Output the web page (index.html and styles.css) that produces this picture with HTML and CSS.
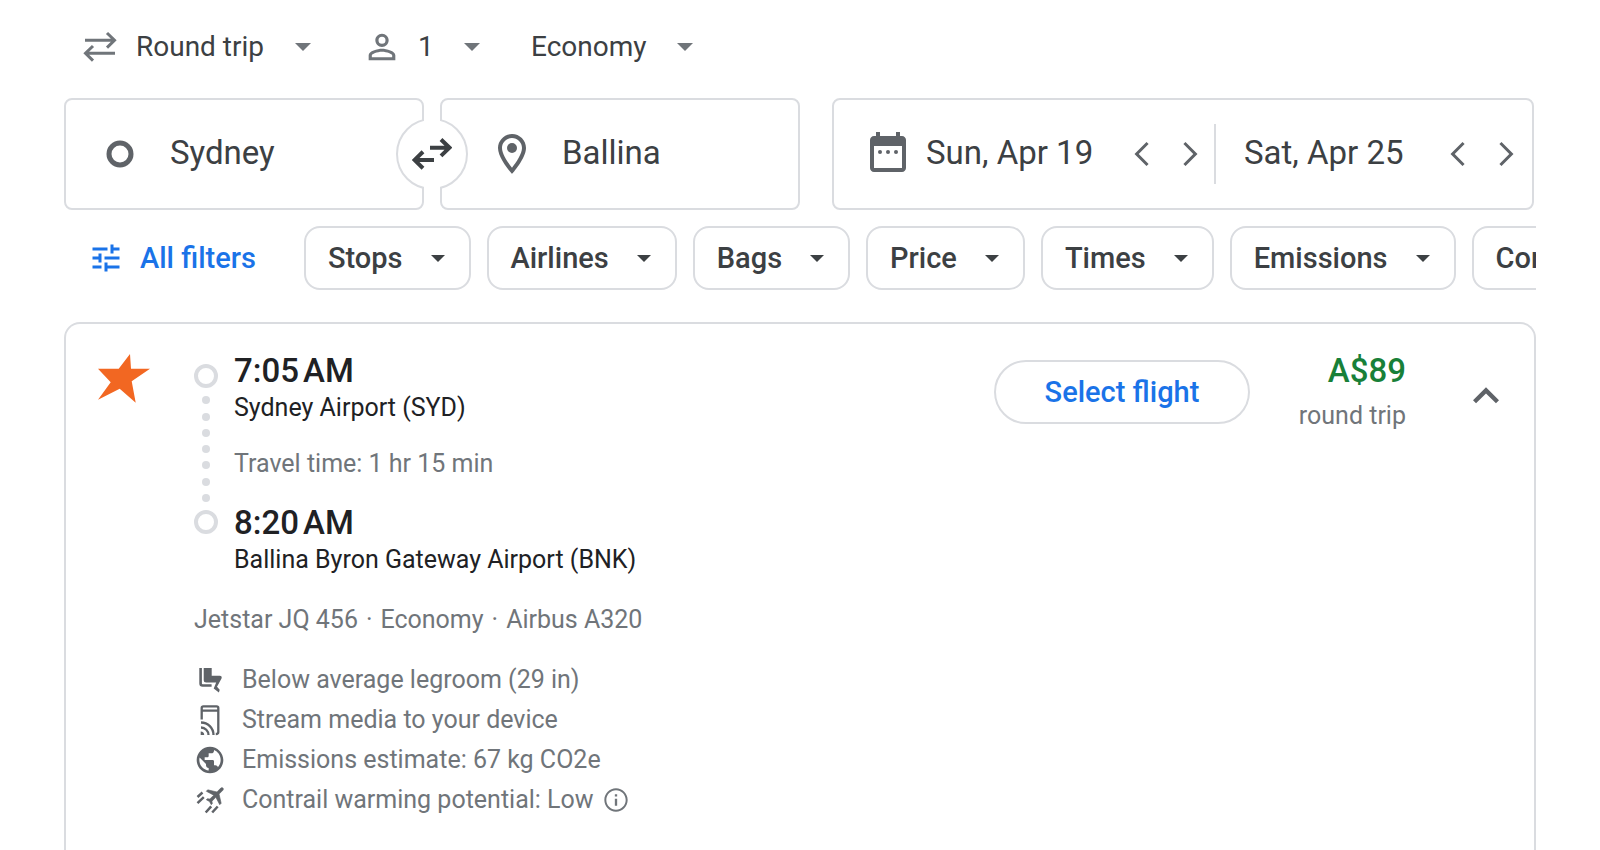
FILE: index.html
```html
<!DOCTYPE html>
<html lang="en">
<head>
  <meta charset="UTF-8">
  <meta name="viewport" content="width=device-width, initial-scale=1">
  <title>Sydney to Ballina flights</title>
  <link rel="stylesheet" href="styles.css">
</head>
<body>
  <form class="search">
    <div class="trip-options">
      <label class="trip-option">
        <svg class="icon-trip" viewBox="0 0 40 40" aria-hidden="true">
          <path d="M5 13.3H34M27 6l7.5 7.3L27 20.600M35 26.300H6M13 19l-7.500 7.300L13 33.600" fill="none" stroke="currentColor" stroke-width="3"/>
        </svg>
        <select aria-label="Trip type"><option>Round trip</option></select>
        <svg class="caret" viewBox="0 0 16 8" aria-hidden="true"><path d="M0 0h16l-8 8z"/></svg>
      </label>
      <label class="trip-option">
        <svg class="icon-trip" viewBox="0 0 24 24" aria-hidden="true">
          <path d="M12 5.900a2.100 2.100 0 1 1 0 4.200 2.100 2.100 0 0 1 0-4.200m0 9c2.970 0 6.100 1.460 6.100 2.100v1.100H5.900V17c0-.64 3.130-2.100 6.100-2.100M12 4C9.790 4 8 5.790 8 8s1.790 4 4 4 4-1.790 4-4-1.790-4-4-4zm0 9c-2.670 0-8 1.340-8 4v3h16v-3c0-2.660-5.330-4-8-4z"/>
        </svg>
        <select aria-label="Passengers"><option>1</option></select>
        <svg class="caret" viewBox="0 0 16 8" aria-hidden="true"><path d="M0 0h16l-8 8z"/></svg>
      </label>
      <label class="trip-option">
        <select aria-label="Seating class"><option>Economy</option></select>
        <svg class="caret" viewBox="0 0 16 8" aria-hidden="true"><path d="M0 0h16l-8 8z"/></svg>
      </label>
    </div>

    <div class="fields">
      <div class="places">
        <label class="field origin">
          <svg class="icon-field" viewBox="0 0 48 48" aria-hidden="true">
            <circle cx="24" cy="24" r="11" fill="none" stroke="currentColor" stroke-width="5"/>
          </svg>
          <input type="text" aria-label="Where from?" value="Sydney">
        </label>
        <label class="field destination">
          <svg class="icon-field" viewBox="0 0 24 24" aria-hidden="true">
            <path d="M12 2C8.130 2 5 5.130 5 9c0 5.250 7 13 7 13s7-7.750 7-13c0-3.870-3.130-7-7-7zM7 9c0-2.760 2.240-5 5-5s5 2.240 5 5c0 2.880-2.880 7.190-5 9.880C9.920 16.210 7 11.850 7 9z"/>
            <circle cx="12" cy="9" r="2.500"/>
          </svg>
          <input type="text" aria-label="Where to?" value="Ballina">
        </label>
        <button type="button" class="swap" aria-label="Swap origin and destination">
          <svg viewBox="0 0 40 32" aria-hidden="true">
            <path d="M18 9.700H38M29 1.500l8.500 8.200-8.500 8.200M22 22H2M11 13.800L2.500 22l8.500 8.200" fill="none" stroke="currentColor" stroke-width="4"/>
          </svg>
        </button>
      </div>

      <div class="field dates">
        <div class="date">
          <svg class="icon-field" viewBox="0 1 24 24" aria-hidden="true">
            <path d="M19 4h-1V2h-2v2H8V2H6v2H5c-1.100 0-2 .9-2 2v14c0 1.100.9 2 2 2h14c1.100 0 2-.9 2-2V6c0-1.100-.9-2-2-2zm0 16H5V9h14z"/>
            <circle cx="8" cy="12" r="1"/><circle cx="12" cy="12" r="1"/><circle cx="16" cy="12" r="1"/>
          </svg>
          <input type="text" aria-label="Departure" value="Sun, Apr 19">
          <button type="button" class="step" aria-label="One day earlier"><svg viewBox="0 0 24 24"><path d="M16.400 5.400L15 4l-8 8 8 8 1.400-1.400L9.800 12z"/></svg></button>
          <button type="button" class="step" aria-label="One day later"><svg viewBox="0 0 24 24"><path d="M7.600 5.400L9 4l8 8-8 8-1.400-1.400 6.600-6.600z"/></svg></button>
        </div>
        <div class="date">
          <input type="text" aria-label="Return" value="Sat, Apr 25">
          <button type="button" class="step" aria-label="One day earlier"><svg viewBox="0 0 24 24"><path d="M16.400 5.400L15 4l-8 8 8 8 1.400-1.400L9.800 12z"/></svg></button>
          <button type="button" class="step" aria-label="One day later"><svg viewBox="0 0 24 24"><path d="M7.600 5.400L9 4l8 8-8 8-1.400-1.400 6.600-6.600z"/></svg></button>
        </div>
      </div>
    </div>

    <div class="filters">
      <button type="button" class="all-filters">
        <svg viewBox="0 0 24 24" aria-hidden="true">
          <path d="M3 17v2h6v-2H3zM3 5v2h10V5H3zm10 16v-2h8v-2h-8v-2h-2v6h2zM7 9v2H3v2h4v2h2V9H7zm14 4v-2H11v2h10zm-6-4h2V7h4V5h-4V3h-2v6z"/>
        </svg>
        All filters
      </button>
      <button type="button" class="chip">Stops<svg viewBox="0 0 14 7"><path d="M0 0h14l-7 7z"/></svg></button>
      <button type="button" class="chip">Airlines<svg viewBox="0 0 14 7"><path d="M0 0h14l-7 7z"/></svg></button>
      <button type="button" class="chip">Bags<svg viewBox="0 0 14 7"><path d="M0 0h14l-7 7z"/></svg></button>
      <button type="button" class="chip">Price<svg viewBox="0 0 14 7"><path d="M0 0h14l-7 7z"/></svg></button>
      <button type="button" class="chip">Times<svg viewBox="0 0 14 7"><path d="M0 0h14l-7 7z"/></svg></button>
      <button type="button" class="chip">Emissions<svg viewBox="0 0 14 7"><path d="M0 0h14l-7 7z"/></svg></button>
      <button type="button" class="chip">Connecting airports<svg viewBox="0 0 14 7"><path d="M0 0h14l-7 7z"/></svg></button>
    </div>
  </form>

  <main class="flight">
    <svg class="airline-logo" viewBox="0 0 52 49" role="img" aria-label="Jetstar">
      <path d="M32 0l1 14.700h19L33.700 27.300l4 21.500-16-14L0 45.700l12.700-17.400L0 14.700h20.700z"/>
    </svg>

    <div class="details">
      <div class="leg">
        <div class="timeline" aria-hidden="true">
          <span class="ring"></span>
          <span class="dot"></span><span class="dot"></span><span class="dot"></span><span class="dot"></span>
          <span class="dot"></span><span class="dot"></span><span class="dot"></span>
          <span class="ring"></span>
        </div>
        <div class="stops">
          <div class="time">7:05&#8239;AM</div>
          <div class="airport">Sydney Airport (SYD)</div>
          <div class="duration">Travel time: 1 hr 15 min</div>
          <div class="time">8:20&#8239;AM</div>
          <div class="airport">Ballina Byron Gateway Airport (BNK)</div>
        </div>
      </div>

      <div class="aircraft">
        <span>Jetstar JQ 456</span><span>·</span><span>Economy</span><span>·</span><span>Airbus A320</span>
      </div>

      <ul class="amenities">
        <li>
          <svg viewBox="0 0 32 32" aria-hidden="true">
            <path d="M6.600 4v15.500q0 2 2 2h9" fill="none" stroke="currentColor" stroke-width="2.600"/>
            <path d="M9.700 4h8v7.700h8q2.700.3 1.800 2.800l-4.500 8.300 2.700 3-.8 2.800-5.200-4.100 2.500-6H12.200q-2.500 0-2.500-2.500z"/>
          </svg>
          Below average legroom (29 in)
        </li>
        <li>
          <svg viewBox="0 0 32 32" aria-hidden="true">
            <path d="M7.700 15.500V4q0-1.700 1.700-1.700h13.200q1.700 0 1.700 1.700v24q0 2-2.500 2M7.700 6.700h16.600M7 18.500A12.500 12.500 0 0 1 19.500 31M7 23.500A7.500 7.500 0 0 1 14.500 31" fill="none" stroke="currentColor" stroke-width="2.300"/>
            <path d="M6.700 27.500A3.500 3.500 0 0 1 10.200 31H6.700z"/>
          </svg>
          Stream media to your device
        </li>
        <li>
          <svg viewBox="0 0 24 24" aria-hidden="true">
            <path d="M12 2C6.480 2 2 6.480 2 12s4.480 10 10 10 10-4.480 10-10S17.520 2 12 2zm-1 17.930c-3.950-.49-7-3.850-7-7.930 0-.62.08-1.210.21-1.790L9 15v1c0 1.100.9 2 2 2v1.930zm6.900-2.540c-.26-.81-1-1.390-1.900-1.390h-1v-3c0-.55-.45-1-1-1H8v-2h2c.55 0 1-.45 1-1V7h2c1.100 0 2-.9 2-2v-.41c2.930 1.190 5 4.060 5 7.410 0 2.080-.8 3.970-2.100 5.390z"/>
          </svg>
          Emissions estimate: 67 kg CO2e
        </li>
        <li>
          <svg viewBox="0 0 32 32" aria-hidden="true">
            <path transform="translate(21.500 11.500) rotate(45) translate(-11.500 -12.500)" stroke="currentColor" stroke-width=".6" d="M21 16v-2l-8-5V3.500c0-.83-.67-1.500-1.500-1.500S10 2.670 10 3.500V9l-8 5v2l8-2.500V19l-2 1.500V22l3.500-1 3.500 1v-1.500L13 19v-5.500l8 2.500z"/>
            <path d="M3.500 13l5-4.500M3.500 19.200l6.300-6M11.700 28.500l5.500-6.200M18.200 28.500l5.500-6" fill="none" stroke="currentColor" stroke-width="2.500"/>
          </svg>
          Contrail warming potential: Low
          <button type="button" class="info" aria-label="About contrail warming">
            <svg viewBox="0 0 24 24"><path d="M11 7h2v2h-2zm0 4h2v6h-2zm1-9C6.480 2 2 6.480 2 12s4.480 10 10 10 10-4.480 10-10S17.520 2 12 2zm0 18.300c-4.600 0-8.300-3.700-8.300-8.300S7.400 3.700 12 3.700s8.300 3.700 8.300 8.300-3.700 8.300-8.300 8.300z"/></svg>
          </button>
        </li>
      </ul>
    </div>

    <button type="button" class="select-flight">Select flight</button>
    <div class="price">
      <div class="amount">A$89</div>
      <div class="price-note">round trip</div>
    </div>
    <button type="button" class="collapse" aria-label="Collapse flight details">
      <svg viewBox="0 0 24 24"><path d="M12 8l-6 6 1.400 1.400 4.600-4.600 4.600 4.600L18 14z"/></svg>
    </button>
  </main>
</body>
</html>
```

FILE: styles.css
```css
* {
  box-sizing: border-box;
}
body {
  display: flex;
  flex-direction: column;
  height: 100vh;
  margin: 0;
  padding: 27px 64px 0;
  overflow: hidden;
  background: #fff;
  color: #3c4043;
  font-family: Roboto, Arial, sans-serif;
  font-size: 25px;
  line-height: 32px;
}
button, input, select {
  margin: 0;
  padding: 0;
  border: none;
  background: none;
  color: inherit;
  font: inherit;
}
button, select {
  cursor: pointer;
}
input {
  width: 100%;
  min-width: 0;
}
svg {
  display: block;
  flex: none;
  fill: currentColor;
}

/* trip type, passengers, class */
.trip-options {
  display: flex;
  gap: 51px;
  padding-left: 16px;
}
.trip-option {
  display: flex;
  align-items: center;
  gap: 16px;
  font-size: 28px;
  line-height: 40px;
}
.trip-option select {
  appearance: none;
}
.icon-trip {
  width: 40px;
  height: 40px;
  color: #70757a;
}
.caret {
  width: 16px;
  height: 8px;
  margin-left: 14px;
  color: #70757a;
  pointer-events: none;
}

/* where and when */
.fields {
  display: flex;
  gap: 32px;
  margin-top: 31px;
}
.places {
  display: grid;
  flex: 0 0 50%;
  grid-template-columns: 1fr 1fr;
  gap: 16px;
  position: relative;
}
.field {
  display: flex;
  align-items: center;
  height: 112px;
  border: 2px solid #dadce0;
  border-radius: 8px;
  font-size: 33px;
  line-height: 40px;
}
.field input {
  height: 44px;
  padding-bottom: 4px;
}
.origin {
  gap: 26px;
  padding: 0 40px 0 30px;
}
.destination {
  gap: 26px;
  padding: 0 30px 0 46px;
}
.icon-field {
  width: 48px;
  height: 48px;
  color: #5f6368;
}
.swap {
  display: flex;
  align-items: center;
  justify-content: center;
  position: absolute;
  top: 20px;
  left: calc(50% - 36px);
  width: 72px;
  height: 72px;
  border: 2px solid #dadce0;
  border-radius: 50%;
  background: #fff;
}
/* opens the circle where the two fields part */
.swap::before {
  content: "";
  position: absolute;
  top: -2px;
  bottom: -2px;
  left: 26px;
  width: 16px;
  background: #fff;
}
.swap svg {
  position: relative;
  width: 40px;
  height: 32px;
}
.dates {
  flex: 1;
  margin-right: 2px;
}
.date {
  display: flex;
  flex: 1 1 318px;
  align-items: center;
}
.date:first-child {
  flex-basis: 380px;
  padding-left: 30px;
}
.date:first-child input {
  padding-left: 14px;
}
.date + .date {
  height: 60px;
  padding: 0 2px 0 28px;
  border-left: 2px solid #dadce0;
}
.step {
  display: flex;
  flex: none;
  align-items: center;
  justify-content: center;
  width: 48px;
  height: 48px;
  color: #5f6368;
}
.step svg {
  width: 36px;
  height: 36px;
}

/* filters */
.filters {
  display: flex;
  gap: 16px;
  margin-top: 16px;
  overflow: hidden;
  font-size: 29px;
  font-weight: 500;
}
.all-filters {
  display: flex;
  flex: none;
  align-items: center;
  gap: 16px;
  margin-right: 8px;
  padding: 0 24px;
  color: #1a73e8;
}
.all-filters svg {
  width: 36px;
  height: 36px;
}
.chip {
  display: flex;
  flex: none;
  align-items: center;
  gap: 28px;
  height: 64px;
  padding: 0 24px 0 22px;
  border: 2px solid #dadce0;
  border-radius: 16px;
}
.chip svg {
  width: 14px;
  height: 7px;
}

/* flight card */
.flight {
  display: flex;
  flex: 1 0 auto;
  align-items: flex-start;
  margin-top: 32px;
  padding: 28px 22px 28px 32px;
  border: 2px solid #dadce0;
  border-bottom: none;
  border-radius: 16px 16px 0 0;
}
.airline-logo {
  width: 52px;
  height: 49px;
  margin-top: 2px;
  color: #f26722;
}
.details {
  flex: 1;
  margin-left: 44px;
  color: #70757a;
}
.leg {
  display: flex;
  gap: 16px;
}
.timeline {
  display: flex;
  flex-direction: column;
  align-items: center;
  justify-content: space-between;
  height: 182px;
  padding-top: 12px;
}
.ring {
  width: 24px;
  height: 24px;
  border: 4px solid #dadce0;
  border-radius: 50%;
}
.dot {
  width: 8px;
  height: 8px;
  border-radius: 50%;
  background: #dadce0;
}
.time {
  color: #202124;
  font-size: 33px;
  font-weight: 500;
  line-height: 38px;
}
.airport {
  margin-top: 2px;
  color: #202124;
}
.duration {
  margin: 24px 0;
}
.aircraft {
  display: flex;
  gap: 8px;
  margin-top: 28px;
}
.amenities {
  margin: 24px 0 0;
  padding: 0;
  list-style: none;
}
.amenities li {
  display: flex;
  align-items: center;
  gap: 16px;
  height: 40px;
}
.amenities li > svg {
  width: 32px;
  height: 32px;
  color: #5f6368;
}
.info {
  margin-left: -8px;
}
.info svg {
  width: 28px;
  height: 28px;
}
.select-flight {
  width: 256px;
  height: 64px;
  margin-top: 8px;
  border: 2px solid #dadce0;
  border-radius: 32px;
  color: #1a73e8;
  font-size: 29px;
  font-weight: 500;
}
.price {
  width: 156px;
  text-align: right;
}
.amount {
  color: #188038;
  font-size: 33px;
  font-weight: 500;
  line-height: 38px;
}
.price-note {
  margin-top: 10px;
  color: #70757a;
}
.collapse {
  margin: 18px 0 0 54px;
  color: #5f6368;
}
.collapse svg {
  width: 52px;
  height: 52px;
}
```
